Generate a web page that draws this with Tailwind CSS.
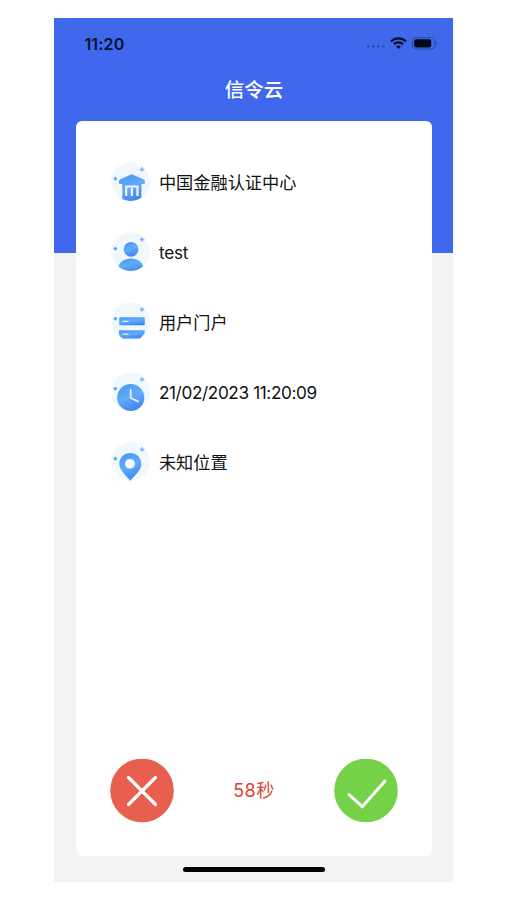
<!DOCTYPE html>
<html lang="zh-CN">
<head>
    <meta charset="UTF-8">
    <meta name="viewport" content="width=device-width, initial-scale=1.0">
    <title>信令云</title>
    <script src="https://cdn.jsdelivr.net/npm/@tailwindcss/browser@4"></script>
</head>
<body class="bg-white font-[Inter,'Noto_Sans_CJK_SC',sans-serif] overflow-hidden">
    <!-- Shared icon parts -->
    <svg class="absolute size-0">
        <defs>
            <linearGradient id="blue" x1="0.2" y1="0" x2="0.6" y2="1">
                <stop offset="0" stop-color="#4a98f6"/>
                <stop offset="0.5" stop-color="#62abf9"/>
                <stop offset="1" stop-color="#4182f0"/>
            </linearGradient>
            <clipPath id="round"><circle cx="19.6" cy="19.7" r="19.3"/></clipPath>
            <g id="bubble">
                <circle cx="19.6" cy="19.7" r="19.3" fill="#f0f8fe"/>
                <path d="M31 5.2v4.6M28.7 7.5h4.6" stroke="#7db4f6" stroke-width="1.4"/>
                <path d="M4.4 14.6l2 2.1-2 2.1-2-2.1z" fill="#5d9df5"/>
            </g>
        </defs>
    </svg>

    <div class="ml-[54.4px] mt-[18.4px] w-[399px] h-[863.5px] flex flex-col bg-[linear-gradient(#3f68ed_235px,#f1f3f5_235px)]">
        <!-- Status bar -->
        <div class="h-[50px] pl-[30px] pr-[15px] flex items-center justify-between text-[#07112f]">
            <span class="pt-0.5 text-[16px] tracking-[0.2px] font-semibold">11:20</span>
            <div class="flex items-center">
                <svg class="w-[20px] h-[12px] mt-1.5 mr-1" viewBox="0 0 20 12" fill="#2c49ab">
                    <rect x="1" y="5" width="2.5" height="2.5" rx="1"/><rect x="6" y="5" width="2.5" height="2.5" rx="1"/><rect x="11" y="5" width="2.5" height="2.5" rx="1"/><rect x="16" y="5" width="2.5" height="2.5" rx="1"/>
                </svg>
                <svg class="w-[17px] h-[12px] mr-[5px]" viewBox="0 0 17 12" fill="none" stroke="#07112f" stroke-width="2.2">
                    <path d="M1 4.4C5.2.3 11.8.3 16 4.4"/>
                    <path d="M3.9 7.3c2.6-2.5 6.6-2.5 9.2 0"/>
                    <path d="M8.5 11.9L6 9.4c1.4-1.3 3.6-1.3 5 0z" fill="#07112f" stroke="none"/>
                </svg>
                <svg class="w-[26px] h-[13px]" viewBox="0 0 26 13">
                    <rect x=".6" y=".6" width="22.3" height="11.3" rx="3.2" fill="none" stroke="#2b49a8"/>
                    <rect x="2.2" y="2.2" width="17" height="8.2" rx="1.8" fill="#03081a"/>
                    <path d="M24.2 4.3c1.6.7 1.6 3.3 0 4z" fill="#2b49a8"/>
                </svg>
            </div>
        </div>

        <!-- Title -->
        <h1 class="h-[52.5px] pt-[7px] text-center text-[19.5px] leading-[30px] font-medium text-white">信令云</h1>

        <!-- Card -->
        <div class="mx-[21.5px] h-[735px] bg-white rounded-md flex flex-col justify-between pt-[41.5px] pb-[33px] px-[34px]">
            <ul class="pl-px flex flex-col gap-[30px] text-[17.2px] text-[#111]">
                <li class="h-10 flex items-center gap-2">
                    <svg class="size-10" viewBox="0 0 40 40">
                        <use href="#bubble"/>
                        <g clip-path="url(#round)">
                            <path d="M20.7 12.3L33 17.5q.8.5.8 1.5v2.2q0 .8-.8.8h-2.6v17H11.3V22H9q-1 0-1-.8V19q0-1 .8-1.5z" fill="url(#blue)"/>
                            <path d="M15.2 34v-9.5h11.3V34M20.8 26v8" fill="none" stroke="#eff7ff" stroke-width="2.2"/>
                        </g>
                    </svg>
                    <span class="pt-px">中国金融认证中心</span>
                </li>
                <li class="h-10 flex items-center gap-2">
                    <svg class="size-10" viewBox="0 0 40 40">
                        <use href="#bubble"/>
                        <circle cx="20" cy="17.3" r="7.4" fill="url(#blue)"/>
                        <path clip-path="url(#round)" d="M7 36c1-6 6-9.6 13-9.6S31.5 30 32.5 36v4H7z" fill="url(#blue)"/>
                    </svg>
                    <span class="pt-px tracking-[-0.2px]">test</span>
                </li>
                <li class="h-10 flex items-center gap-2">
                    <svg class="size-10" viewBox="0 0 40 40">
                        <use href="#bubble"/>
                        <rect x="8.2" y="15.2" width="25.6" height="8" rx="1.2" fill="url(#blue)"/>
                        <path d="M8 28.3h25.6v3.2l-4.6 5H12q-4-2-4-5z" fill="url(#blue)"/>
                        <path d="M11.7 19.3h5.8M11.7 32.2h5.8" stroke="#e8f5ff" stroke-width="1.3"/>
                    </svg>
                    <span class="pt-px">用户门户</span>
                </li>
                <li class="h-10 flex items-center gap-2">
                    <svg class="size-10" viewBox="0 0 40 40">
                        <use href="#bubble"/>
                        <circle cx="19.7" cy="25.5" r="13.6" fill="url(#blue)"/>
                        <path d="M19.7 17.8V26l7.5 3.4" fill="none" stroke="#e6f3ff" stroke-width="1.7" stroke-linecap="round" stroke-linejoin="round"/>
                    </svg>
                    <span class="pt-px tracking-[-0.38px]">21/02/2023 11:20:09</span>
                </li>
                <li class="h-10 flex items-center gap-2">
                    <svg class="size-10" viewBox="0 0 40 40">
                        <use href="#bubble"/>
                        <path d="M19.3 11C13 11 8.3 15.7 8.3 21.8c0 5.8 4.3 9.5 11 16.9 6.7-7.4 11-11.1 11-16.9C30.3 15.7 25.6 11 19.3 11z" fill="url(#blue)"/>
                        <circle cx="19" cy="21.8" r="4.9" fill="#f4faff"/>
                    </svg>
                    <span class="pt-px">未知位置</span>
                </li>
            </ul>

            <!-- Reject / countdown / approve -->
            <div class="flex items-center justify-between">
                <button aria-label="拒绝">
                    <svg class="size-16" viewBox="0 0 64 64" fill="none">
                        <circle cx="32" cy="31.5" r="31.8" fill="#e85f50"/>
                        <path d="M18.5 18.5l27 27M45.5 18.5l-27 27" stroke="#fff" stroke-width="3.2" stroke-linecap="round"/>
                    </svg>
                </button>
                <span class="text-[18px] tracking-[0.4px] text-[#df4238]">58秒</span>
                <button aria-label="同意">
                    <svg class="size-16" viewBox="0 0 64 64" fill="none">
                        <circle cx="32" cy="31.5" r="31.8" fill="#75d148"/>
                        <path d="M15 35.7l13.3 12L51 22" stroke="#fff" stroke-width="3" stroke-linecap="round"/>
                    </svg>
                </button>
            </div>
        </div>

        <!-- Home indicator -->
        <div class="mx-auto mt-[11px] w-[142px] h-[5.5px] rounded-full bg-black"></div>
    </div>
</body>
</html>
